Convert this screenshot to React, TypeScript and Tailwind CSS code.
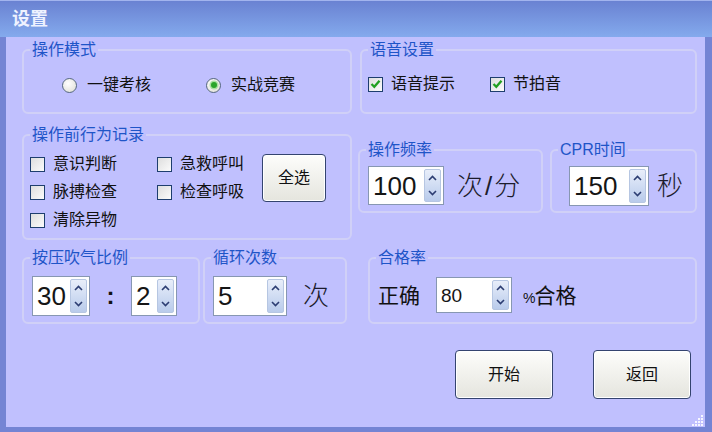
import React from "react";

function Arrow({ up }: { up?: boolean }) {
  return (
    <svg width="9" height="6" viewBox="0 0 9 6" className="block">
      <path
        d={up ? "M1 5 L4.5 1.5 L8 5" : "M1 1 L4.5 4.5 L8 1"}
        fill="none"
        stroke="#2c3d72"
        strokeWidth="1.6"
      />
    </svg>
  );
}

function Spin({ value, box, text }: { value: string; box: string; text: string }) {
  return (
    <div className={`flex items-stretch bg-white border border-[#8797b2] py-[2px] pr-[2px] ${box}`}>
      <div className={`flex-1 flex items-center pl-[4px] text-[#151515] leading-none ${text}`}>{value}</div>
      <div className="w-[17px] flex flex-col items-center justify-around rounded-[2px] border border-[#b6c6e2] bg-gradient-to-b from-[#e8eefa] to-[#b9cbeb]">
        <Arrow up />
        <Arrow />
      </div>
    </div>
  );
}

function Radio({ checked, label }: { checked?: boolean; label: string }) {
  return (
    <div className="flex items-center h-[20px]">
      <div className="w-[15px] h-[15px] rounded-full border border-[#56687e] bg-[radial-gradient(circle_at_40%_35%,#ffffff,#dcdcd2)] flex items-center justify-center">
        {checked && <div className="w-[6px] h-[6px] rounded-full bg-[#2aa52a] shadow-[0_0_0_1.5px_#a8e0a0]" />}
      </div>
      <span className="ml-[10px] text-[16px] leading-none text-[#111]">{label}</span>
    </div>
  );
}

function Check({ checked, label }: { checked?: boolean; label: string }) {
  return (
    <div className="flex items-center h-[20px]">
      <div className="w-[15px] h-[15px] border border-[#1e3e6e] bg-gradient-to-br from-[#dedede] to-[#fbfbfb] flex items-center justify-center">
        {checked && (
          <svg width="11" height="10" viewBox="0 0 11 10">
            <path d="M1.5 5 L4.3 7.8 L9.5 1.8" fill="none" stroke="#21a021" strokeWidth="2.3" />
          </svg>
        )}
      </div>
      <span className="ml-[8px] text-[16px] leading-none text-[#111]">{label}</span>
    </div>
  );
}

function Group({ title, className, children }: { title: string; className: string; children: React.ReactNode }) {
  return (
    <fieldset className={`border-2 border-[#d0d0f7] rounded-[6px] min-w-0 ${className}`}>
      <legend className="ml-[6px] px-[2px] text-[16px] leading-[18px] text-[#1f55c8]">{title}</legend>
      {children}
    </fieldset>
  );
}

function Button({ label, className }: { label: string; className: string }) {
  return (
    <button className={`rounded-[4px] border border-[#34446f] bg-gradient-to-b from-[#fdfdfb] to-[#e5e5de] text-[16px] text-[#111] shadow-[inset_0_0_0_1px_#ffffff] ${className}`}>
      {label}
    </button>
  );
}

export default function App() {
  return (
    <div className="w-[712px] h-[432px] flex flex-col bg-[#7484d4] overflow-hidden font-['Liberation_Sans','Noto_Sans_CJK_SC',sans-serif]">
      {/* title bar */}
      <div className="h-[37px] shrink-0 flex items-center pl-[12px] border-t border-[#a2b4ee] bg-gradient-to-b from-[#6a82d2] to-[#84aaed]">
        <span className="text-[18px] font-bold leading-none text-[#eef2ff]">设置</span>
      </div>

      {/* client area */}
      <div className="relative flex-1 ml-[6px] mr-[7px] mb-[5px] bg-[#c0c0fe] pl-[16px] pt-[4px]">
        {/* mode + voice */}
        <div className="flex gap-[8px] h-[73px]">
          <Group title="操作模式" className="w-[330px] h-full">
            <div className="flex pt-[16px] pl-[38px] gap-[55px]">
              <Radio label="一键考核" />
              <Radio label="实战竞赛" checked />
            </div>
          </Group>
          <Group title="语音设置" className="w-[337px] h-full">
            <div className="flex pt-[15px] pl-[6px] gap-[35px]">
              <Check label="语音提示" checked />
              <Check label="节拍音" checked />
            </div>
          </Group>
        </div>

        {/* pre-operation record + frequency / duration */}
        <div className="flex mt-[12px] h-[114px]">
          <Group title="操作前行为记录" className="w-[330px] h-full">
            <div className="grid grid-cols-[127px_105px_64px] grid-rows-[20px_20px_20px] gap-y-[8px] pt-[10px] pl-[6px]">
              <Check label="意识判断" />
              <Check label="急救呼叫" />
              <Button label="全选" className="row-span-2 w-[64px] h-[48px]" />
              <Check label="脉搏检查" />
              <Check label="检查呼吸" />
              <Check label="清除异物" />
            </div>
          </Group>
          <div className="flex pt-[15px] ml-[6px] gap-[7px]">
            <Group title="操作频率" className="w-[185px] h-[72px]">
              <div className="flex items-center pt-[7px] pl-[8px]">
                <Spin value="100" box="w-[76px] h-[39px]" text="text-[26px]" />
                <span className="ml-[13px] text-[26px] font-light leading-none text-[#1c1c2c] tracking-[2px]">次/分</span>
              </div>
            </Group>
            <Group title="CPR时间" className="w-[147px] h-[72px]">
              <div className="flex items-center pt-[7px] pl-[17px]">
                <Spin value="150" box="w-[80px] h-[40px]" text="text-[26px]" />
                <span className="ml-[8px] text-[26px] font-light leading-none text-[#1c1c2c]">秒</span>
              </div>
            </Group>
          </div>
        </div>

        {/* ratio, cycles, pass rate */}
        <div className="flex mt-[9px] h-[75px]">
          <Group title="按压吹气比例" className="w-[178px] h-full">
            <div className="flex items-center pt-[9px] pl-[8px]">
              <Spin value="30" box="w-[58px] h-[40px]" text="text-[26px]" />
              <span className="w-[41px] text-center text-[24px] font-bold leading-none text-[#111]">:</span>
              <Spin value="2" box="w-[46px] h-[40px]" text="text-[26px]" />
            </div>
          </Group>
          <Group title="循环次数" className="ml-[3px] w-[144px] h-full">
            <div className="flex items-center pt-[9px] pl-[8px]">
              <Spin value="5" box="w-[74px] h-[40px]" text="text-[26px]" />
              <span className="ml-[16px] text-[26px] font-light leading-none text-[#1c1c2c]">次</span>
            </div>
          </Group>
          <Group title="合格率" className="ml-[21px] w-[329px] h-full">
            <div className="flex items-center pt-[10px] pl-[8px]">
              <span className="text-[21px] leading-none text-[#111]">正确</span>
              <Spin value="80" box="ml-[16px] w-[76px] h-[36px]" text="text-[19px]" />
              <span className="ml-[11px] text-[21px] leading-none text-[#111]">
                <span className="text-[14px] tracking-[-1px]">%</span>合格
              </span>
            </div>
          </Group>
        </div>

        {/* actions */}
        <div className="flex justify-end gap-[40px] mt-[26px] pr-[14px]">
          <Button label="开始" className="w-[98px] h-[49px]" />
          <Button label="返回" className="w-[98px] h-[49px]" />
        </div>

        {/* size grip */}
        <svg width="12" height="12" viewBox="0 0 12 12" className="absolute right-[1px] bottom-[1px]">
          {[
            [10, 2], [10, 5], [7, 5], [10, 8], [7, 8], [4, 8], [10, 11], [7, 11], [4, 11], [1, 11],
          ].map(([x, y], i) => (
            <rect key={i} x={x - 1} y={y - 1} width="2" height="2" fill="#ffffff" opacity="0.85" />
          ))}
        </svg>
      </div>
    </div>
  );
}
